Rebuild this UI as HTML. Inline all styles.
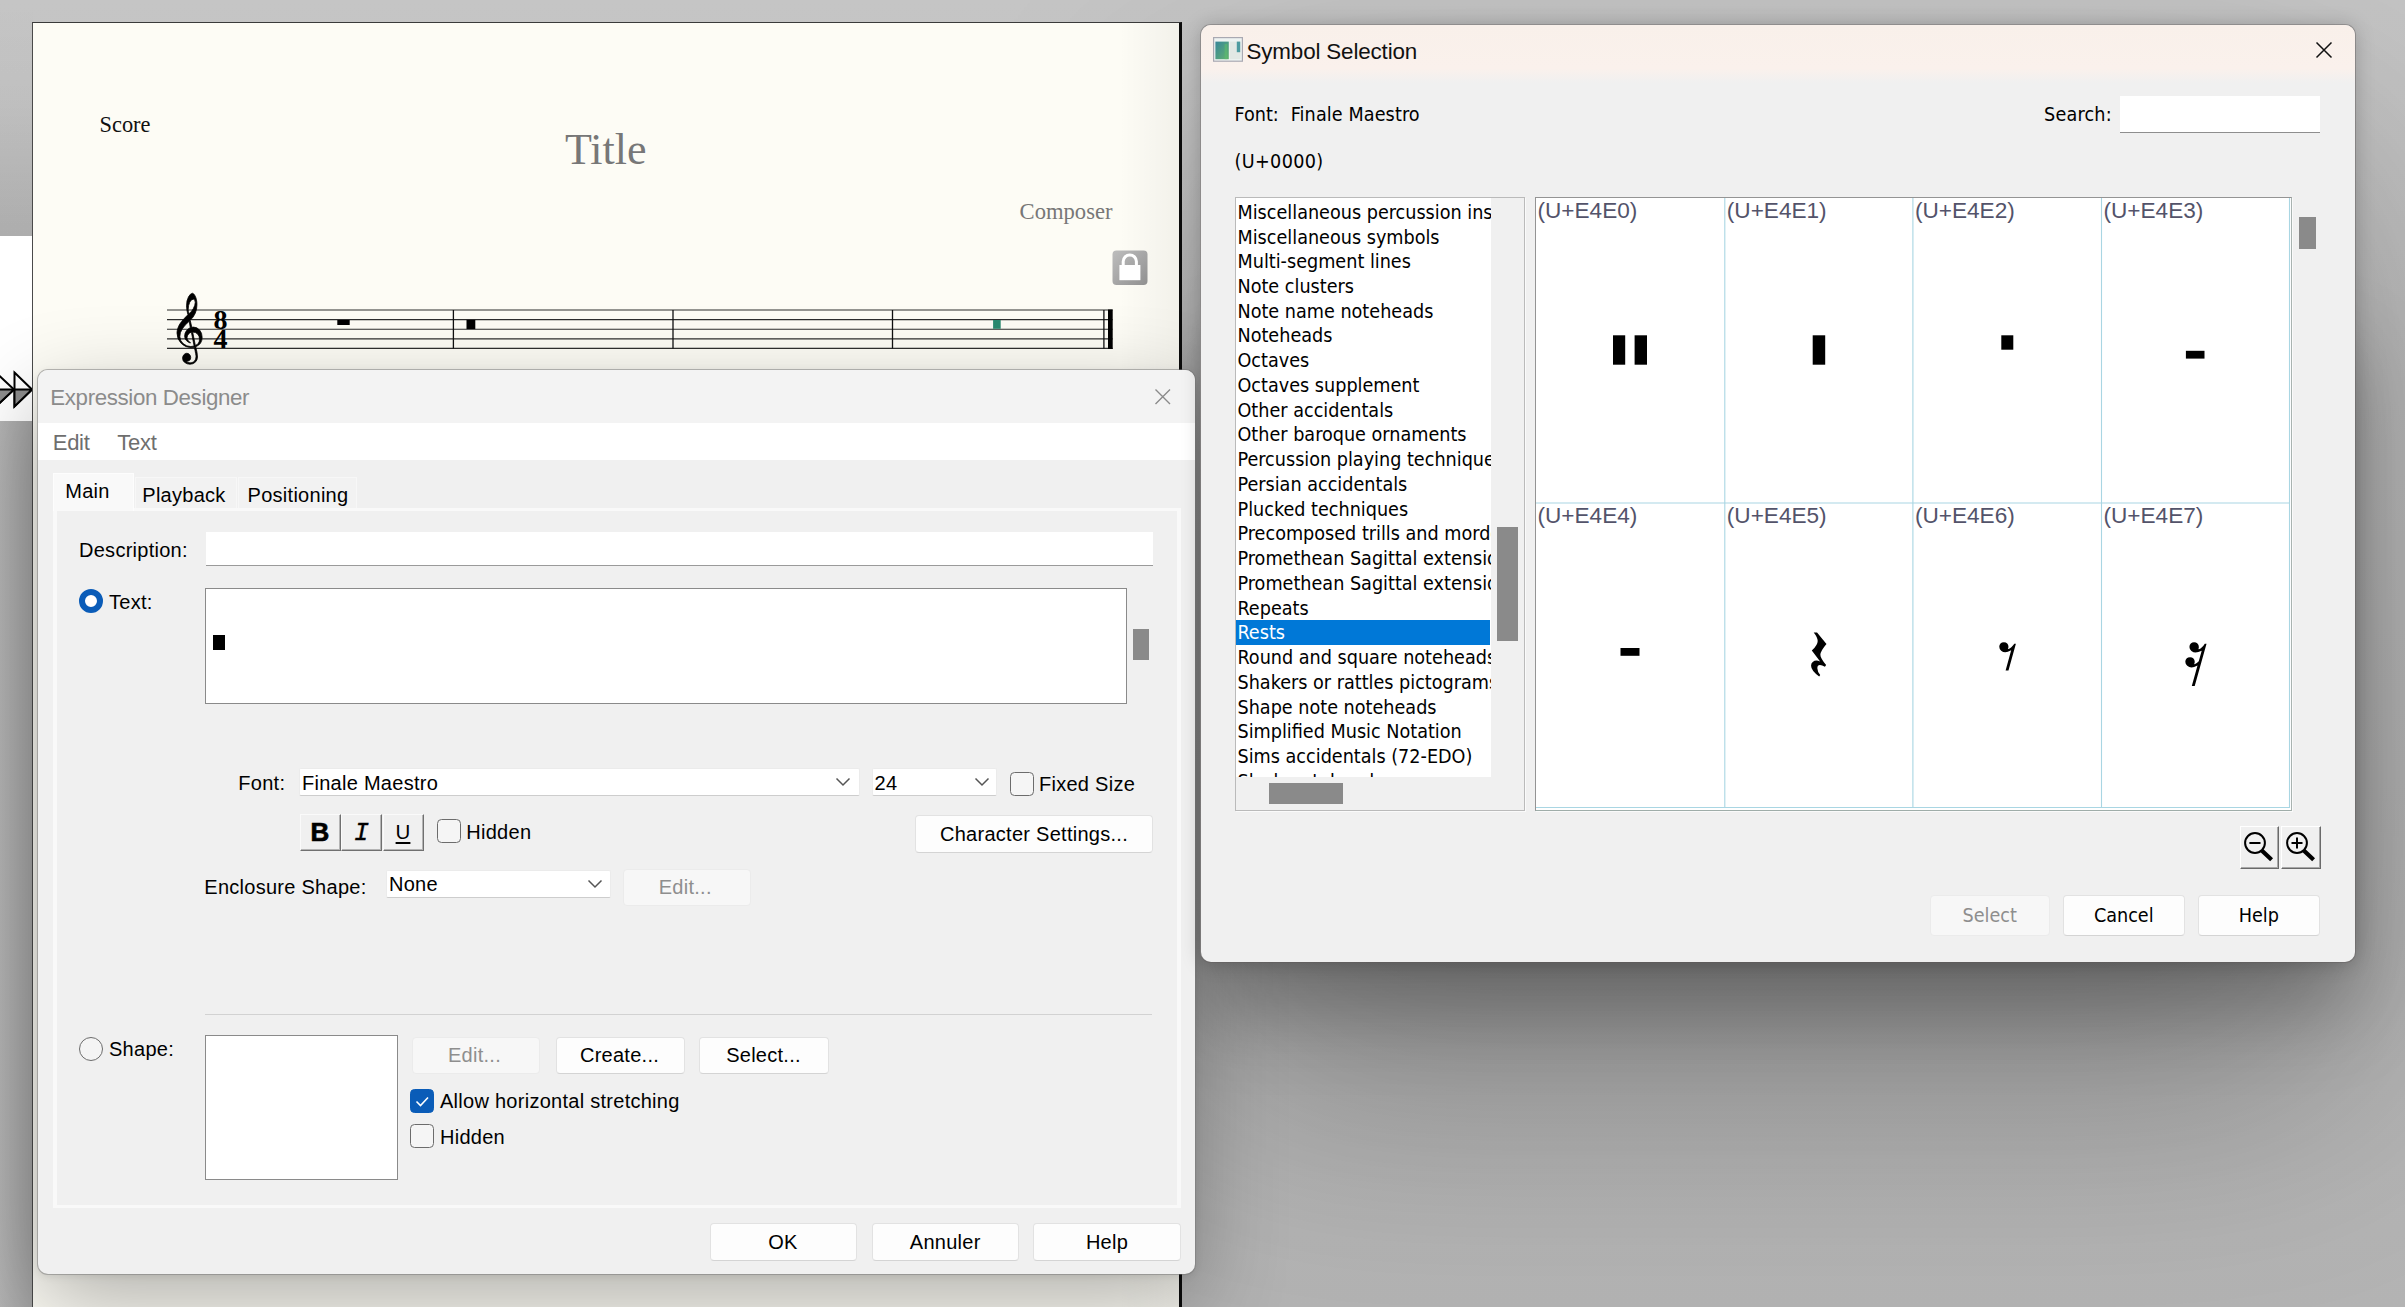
<!DOCTYPE html>
<html><head><meta charset="utf-8"><title>Expression Designer</title>
<style>
*{box-sizing:border-box}
html,body{margin:0;padding:0}
body{width:2405px;height:1307px;position:relative;overflow:hidden;background:#c3c3c3;font-family:"Liberation Sans",sans-serif;color:#000}
.abs{position:absolute}
.t{position:absolute;white-space:nowrap;line-height:1}
/* score page */
#bgshade{left:0;top:0;width:2405px;height:1307px;background:linear-gradient(180deg,#c5c5c5 0,#c0c0c0 30%,#b4b4b4 100%)}
#page{left:32px;top:22px;width:1150px;height:1300px;background:#fdfcf5;border-left:1px solid #4a4a4a;border-top:1px solid #3a3a3a;border-right:3px solid #0c0c0c}
.serif{font-family:"Liberation Serif",serif}
/* dialogs */
.dlg{background:#f0f0f0;border-radius:10px}
.ar{font-family:"Liberation Sans",sans-serif;font-size:20px;letter-spacing:.27px}
.th{font-family:"DejaVu Sans Condensed","DejaVu Sans",sans-serif;font-stretch:condensed;font-size:19.6px}
.btn{position:absolute;background:#fdfdfd;border:1px solid #e2e2e2;border-bottom-color:#d4d4d4;border-radius:4px;text-align:center;white-space:nowrap}
.btn.dis{background:#f7f7f7;border-color:#ebebeb;color:#8e8e8e}
.inp{position:absolute;background:#fff;border-bottom:1px solid #9a9a9a}
.cb{position:absolute;width:24px;height:24px;border:1.4px solid #6c6c6c;border-radius:4.5px;background:#f5f5f5}
.rb{position:absolute;width:24px;height:24px;border:1.4px solid #6c6c6c;border-radius:50%;background:#f4f4f4}
.biu{width:41px;height:37px;background:#f0f0f0;border-top:1px solid #fafafa;border-left:1px solid #fafafa;border-right:1.5px solid #707070;border-bottom:1.5px solid #707070;text-align:center;line-height:34px;box-shadow:inset -1px -1px 0 #b4b4b4}
.li{white-space:nowrap;padding-top:1.3px}
.cl{font-family:"Liberation Sans",sans-serif;font-size:22.6px;color:#53536a}
.zb{width:40px;height:43px;background:#f0f0f0;border-top:1px solid #fff;border-left:1px solid #fff;border-right:1.5px solid #6a6a6a;border-bottom:1.5px solid #6a6a6a;box-shadow:inset -1px -1px 0 #a8a8a8}
</style></head>
<body>
<div id="bgshade" class="abs"></div>
<div class="abs" style="left:1200px;top:24px;width:1155px;height:938px;border-radius:11px;box-shadow:0 125px 300px rgba(0,0,0,.30)"></div>
<div class="abs" style="left:1200px;top:300px;width:1155px;height:662px;border-radius:11px;box-shadow:0 50px 80px rgba(0,0,0,.25)"></div>
<div class="abs" style="left:0;top:421px;width:33px;height:900px;background:linear-gradient(90deg,#b3b3b3,#a2a2a2)"></div>
<!--LEFTSTRIP-->
<!--PAGE-START-->
<div class="abs" style="left:0;top:0;width:33px;height:236px;background:linear-gradient(180deg,rgba(0,0,0,0) 0,rgba(0,0,0,.02) 40%,rgba(0,0,0,.11) 100%)"></div>
<div class="abs" style="left:0;top:236px;width:33px;height:185px;background:#fff"></div>
<svg class="abs" style="left:0;top:368px" width="33" height="44" viewBox="0 0 33 44">
 <g stroke="#000" stroke-width="2" stroke-linejoin="miter">
  <path d="M-4 4.5 L14 21.5 L-4 38.5 Z" fill="#fff"/><path d="M-4 21.5 L14 21.5 L-4 38.5 Z" fill="#8c8c8c"/>
  <path d="M14.5 4.5 L32 21.5 L14.5 38.5 Z" fill="#fff"/><path d="M14.5 21.5 L32 21.5 L14.5 38.5 Z" fill="#8c8c8c"/>
 </g>
</svg>
<div id="page" class="abs"></div>
<div class="abs" style="left:1119px;top:23px;width:60px;height:1284px;background:linear-gradient(90deg,rgba(0,0,0,0),rgba(0,0,0,.045))"></div>
<div class="t serif" style="left:99.5px;top:114px;font-size:22.4px;color:#111">Score</div>
<div class="t serif" style="left:565px;top:127.6px;font-size:44px;color:#777">Title</div>
<div class="t serif" style="left:1019.6px;top:201px;font-size:22.6px;color:#777">Composer</div>
<svg class="abs" style="left:1112px;top:250px" width="36" height="36" viewBox="0 0 36 36">
 <defs><linearGradient id="lk" x1="0" y1="0" x2="1" y2="1"><stop offset="0" stop-color="#bdbdbd"/><stop offset="1" stop-color="#909090"/></linearGradient></defs>
 <rect x="0.5" y="0.5" width="35" height="34.5" rx="4" fill="url(#lk)"/>
 <path d="M11.2 16 V11.5 a6.6 6.6 0 0 1 13.2 0 V16" fill="none" stroke="#fff" stroke-width="3"/>
 <rect x="7.4" y="15" width="21" height="15.2" fill="#fff"/>
</svg>
<svg class="abs" style="left:160px;top:285px" width="960" height="90" viewBox="160 285 960 90">
 <g stroke="#2e2e2e" stroke-width="1.15">
  <path d="M167 310H1112.6M167 319.6H1112.6M167 329.2H1112.6M167 338.8H1112.6M167 348.4H1112.6"/>
  <path d="M453.4 310V348.4M673 310V348.4M892.5 310V348.4M1103.9 310V348.4" stroke="#111" stroke-width="1.3"/>
 </g>
 <rect x="1108" y="309.5" width="4.7" height="39.5" fill="#000"/>
 <g transform="translate(169.85 346.9) scale(0.0596 -0.0596)"><path d="M434 2Q464 -103 464 -170Q464 -223 427.0 -257.0Q390 -291 337 -291Q287 -291 250.0 -261.5Q213 -232 213 -190Q213 -160 233.5 -133.5Q254 -107 283.5 -107.0Q313 -107 331.5 -128.5Q350 -150 350 -178Q350 -240 280 -240Q298 -268 338 -268Q353 -268 368.5 -263.5Q384 -259 401.0 -248.0Q418 -237 428.5 -213.5Q439 -190 439 -157Q439 -136 411 -6Q389 -12 356 -12Q259 -12 189.5 60.0Q120 132 120 232Q120 267 131.5 303.0Q143 339 157.5 366.5Q172 394 200.5 428.5Q229 463 248.5 483.5Q268 504 303 539Q280 621 280 689Q280 779 313.0 839.5Q346 900 379 900Q389 900 401.5 887.0Q414 874 426.0 851.0Q438 828 446.5 790.5Q455 753 455 710Q455 551 342 447L368 329Q384 332 397 332Q458 332 500.0 282.5Q542 233 542 162Q542 44 434 2ZM426 746Q426 801 394 801Q358 801 333.0 748.0Q308 695 308 630Q308 588 321 557Q359 580 392.5 639.5Q426 699 426 746ZM498 128Q498 183 466.0 216.0Q434 249 383 249L428 23Q498 52 498 128ZM407 17 361 247Q334 241 311.5 214.0Q289 187 289 158Q289 143 295.0 128.5Q301 114 309.5 104.0Q318 94 327.0 86.0Q336 78 342.0 74.5Q348 71 348 71L340 66Q307 75 277.5 106.0Q248 137 248 184Q248 231 277.5 270.5Q307 310 343 323L325 430Q168 299 168 177Q168 104 223.0 55.0Q278 6 348 6Q365 6 407 17Z" fill="#000" stroke="#000" stroke-width="13"/></g>
 <text x="213.6" y="329" font-family="Liberation Serif, serif" font-weight="bold" font-size="28" fill="#000">8</text>
 <text x="213.6" y="347.6" font-family="Liberation Serif, serif" font-weight="bold" font-size="28" fill="#000">4</text>
 <rect x="337.3" y="320" width="12.4" height="5" fill="#000"/>
 <rect x="466.5" y="319.9" width="8.8" height="9.2" fill="#000"/>
 <rect x="993.1" y="320" width="7.6" height="8.8" fill="#2a8a70"/>
</svg>
<!--PAGE-END-->
<!--EXPR-START-->
<div id="expr" class="abs dlg" style="left:38px;top:370px;width:1157px;height:904px;box-shadow:0 0 0 1px rgba(120,120,120,.5),0 30px 90px rgba(0,0,0,.30),0 2px 8px rgba(0,0,0,.10);background:#f0f0f0">
 <div class="abs" style="left:0;top:0;width:1157px;height:54px;background:#f3f3f3;border-radius:10px 10px 0 0"></div>
 <div class="t" style="left:12.3px;top:17px;font-size:22.3px;letter-spacing:-.36px;color:#8b8b8b">Expression Designer</div>
 <svg class="abs" style="left:1116px;top:18px" width="18" height="18" viewBox="0 0 18 18"><path d="M1.5 1.5L16 16M16 1.5L1.5 16" stroke="#8a8a8a" stroke-width="1.4" fill="none"/></svg>
 <div class="abs" style="left:0;top:53px;width:1157px;height:37px;background:#fff"></div>
 <div class="t" style="left:14.8px;top:62.3px;font-size:22px;letter-spacing:-.3px;color:#6e6e6e">Edit</div>
 <div class="t" style="left:79.3px;top:62.3px;font-size:22px;letter-spacing:-.3px;color:#6e6e6e">Text</div>
 <!-- tabs -->
 <div class="abs" style="left:14.5px;top:138px;width:1128px;height:699.5px;border:3.5px solid #f9f9f9;border-left-width:4.5px;border-right-width:4.5px;background:#f0f0f0"></div>
 <div class="abs" style="left:15px;top:103px;width:81px;height:38px;background:#f9f9f9;border:1px solid #fdfdfd;border-bottom:none"></div>
 <div class="abs" style="left:97px;top:107px;width:102px;height:31px;background:#f2f2f2;border:1px solid #f7f7f7;border-bottom:none"></div>
 <div class="abs" style="left:200px;top:107px;width:119px;height:31px;background:#f2f2f2;border:1px solid #f7f7f7;border-bottom:none"></div>
 <div class="t ar" style="left:27.3px;top:110.6px">Main</div>
 <div class="t ar" style="left:104.3px;top:114.8px">Playback</div>
 <div class="t ar" style="left:209.6px;top:114.8px">Positioning</div>
 <!-- description -->
 <div class="t ar" style="left:41px;top:170.3px">Description:</div>
 <div class="inp" style="left:168px;top:162px;width:947px;height:34px"></div>
 <!-- text radio -->
 <div class="rb" style="left:41px;top:219px;border:6.5px solid #0a5cb8;background:#fff"></div>
 <div class="t ar" style="left:71px;top:222px">Text:</div>
 <div class="abs" style="left:167px;top:217.5px;width:922px;height:116px;background:#fff;border:1px solid #8a8a8a"></div>
 <div class="abs" style="left:174.5px;top:265px;width:12.5px;height:15px;background:#000"></div>
 <div class="abs" style="left:1095px;top:259px;width:15.5px;height:31px;background:#8a8a8a"></div>
 <!-- font row -->
 <div class="t ar" style="left:200.3px;top:402.6px">Font:</div>
 <div class="inp" style="left:260.5px;top:398px;width:561px;height:27.5px;border:1px solid #ebebeb;border-bottom-color:#cdcdcd;border-radius:2px"></div>
 <div class="t ar" style="left:264px;top:403px">Finale Maestro</div>
 <svg class="abs" style="left:797px;top:407px" width="16" height="10" viewBox="0 0 16 10"><path d="M1.5 1.5L8 8L14.5 1.5" stroke="#555" stroke-width="1.5" fill="none"/></svg>
 <div class="inp" style="left:834px;top:398px;width:125px;height:27.5px;border:1px solid #ebebeb;border-bottom-color:#cdcdcd;border-radius:2px"></div>
 <div class="t ar" style="left:836.5px;top:403px">24</div>
 <svg class="abs" style="left:936px;top:407px" width="16" height="10" viewBox="0 0 16 10"><path d="M1.5 1.5L8 8L14.5 1.5" stroke="#555" stroke-width="1.5" fill="none"/></svg>
 <div class="cb" style="left:972px;top:402px"></div>
 <div class="t ar" style="left:1001px;top:404.2px">Fixed Size</div>
 <!-- B I U -->
 <div class="abs biu" style="left:261.5px;top:444px"><b style="font-size:26px;-webkit-text-stroke:.7px #000;letter-spacing:0">B</b></div>
 <div class="abs biu" style="left:303px;top:444px"><i style="font-family:'Liberation Mono',monospace;font-size:25px;-webkit-text-stroke:.35px #000;position:relative;top:2px">I</i></div>
 <div class="abs biu" style="left:344.5px;top:444px"><span style="font-size:20.5px;text-decoration:underline;text-decoration-thickness:2.2px;text-underline-offset:2.6px">U</span></div>
 <div class="cb" style="left:399px;top:449px"></div>
 <div class="t ar" style="left:428.3px;top:452px">Hidden</div>
 <div class="btn ar" style="left:877px;top:445px;width:238px;height:38px;line-height:36px">Character Settings...</div>
 <!-- enclosure -->
 <div class="t ar" style="left:166.3px;top:507.2px">Enclosure Shape:</div>
 <div class="inp" style="left:348px;top:500px;width:225px;height:27.5px;border:1px solid #ebebeb;border-bottom-color:#cdcdcd;border-radius:2px"></div>
 <div class="t ar" style="left:351px;top:504px">None</div>
 <svg class="abs" style="left:549px;top:509px" width="16" height="10" viewBox="0 0 16 10"><path d="M1.5 1.5L8 8L14.5 1.5" stroke="#555" stroke-width="1.5" fill="none"/></svg>
 <div class="btn dis ar" style="left:584.5px;top:499px;width:128.5px;height:37px;line-height:35px;text-indent:-3px">Edit...</div>
 <div class="abs" style="left:167px;top:643.6px;width:947px;height:1.5px;background:#d2d2d2"></div>
 <!-- shape -->
 <div class="rb" style="left:41px;top:667px"></div>
 <div class="t ar" style="left:71px;top:669px">Shape:</div>
 <div class="abs" style="left:167px;top:665px;width:193px;height:145px;background:#fff;border:1px solid #8a8a8a"></div>
 <div class="btn dis ar" style="left:374px;top:666.5px;width:128px;height:37px;line-height:35px;text-indent:-3px">Edit...</div>
 <div class="btn ar" style="left:518px;top:666.5px;width:129px;height:37px;line-height:35px;text-indent:-2px">Create...</div>
 <div class="btn ar" style="left:660.5px;top:666.5px;width:130px;height:37px;line-height:35px">Select...</div>
 <div class="cb" style="left:372px;top:719px;background:#0a5cb8;border-color:#0a5cb8"><svg width="22" height="22" viewBox="0 0 22 22" style="position:absolute;left:0;top:0"><path d="M5.5 11.5L9.5 15.5L17 7.5" stroke="#fff" stroke-width="1.6" fill="none"/></svg></div>
 <div class="t ar" style="left:402px;top:721px">Allow horizontal stretching</div>
 <div class="cb" style="left:372px;top:754px"></div>
 <div class="t ar" style="left:402px;top:756.5px">Hidden</div>
 <!-- bottom buttons -->
 <div class="btn ar" style="left:671.5px;top:853px;width:147px;height:38px;line-height:36px">OK</div>
 <div class="btn ar" style="left:833.5px;top:853px;width:147.5px;height:38px;line-height:36px">Annuler</div>
 <div class="btn ar" style="left:995px;top:853px;width:148px;height:38px;line-height:36px">Help</div>
</div>
<!--EXPR-END-->
<!--SYM-START-->
<div id="sym" class="abs dlg" style="left:1200.5px;top:24.5px;width:1154.5px;height:937.5px;box-shadow:0 0 0 1px rgba(95,90,90,.42),0 1px 20px rgba(0,0,0,.22)">
 <div class="abs" style="left:0;top:0;width:100%;height:58px;background:linear-gradient(180deg,#f9f0ea 0,#faf1ec 75%,#f0f0f0 100%);border-radius:10px 10px 0 0"></div>
 <svg class="abs" style="left:12px;top:12px" width="31" height="26" viewBox="0 0 31 26">
  <defs><linearGradient id="ig" x1="0" y1="0" x2="1" y2="1"><stop offset="0" stop-color="#38869a"/><stop offset="1" stop-color="#62b26e"/></linearGradient></defs>
  <rect x="0.6" y="0.6" width="28.8" height="23.6" fill="#eef3f2" stroke="#a9a9b2" stroke-width="1.2"/>
  <rect x="2.4" y="4.6" width="13.4" height="17.6" fill="url(#ig)"/>
  <rect x="11.6" y="7" width="2.6" height="15.2" fill="#5cc06c" opacity=".55"/>
  <rect x="16.6" y="4.6" width="11" height="17.6" fill="#e2e8e4"/>
  <rect x="23.8" y="4.6" width="3.4" height="10.6" fill="#4e9ba0"/>
 </svg>
 <div class="t" style="left:46px;top:16px;font-size:22.4px;letter-spacing:-.15px;color:#111">Symbol Selection</div>
 <svg class="abs" style="left:1113px;top:15px" width="20" height="20" viewBox="0 0 20 20"><path d="M2.5 2.5L17.5 17.5M17.5 2.5L2.5 17.5" stroke="#111" stroke-width="1.5" fill="none"/></svg>
 <div class="t th" style="left:34px;top:80px">Font:</div>
 <div class="t th" style="left:90.3px;top:80px;letter-spacing:.1px">Finale Maestro</div>
 <div class="t th" style="left:843.5px;top:80px;letter-spacing:.2px">Search:</div>
 <div class="inp" style="left:919px;top:71.5px;width:200.5px;height:36.5px;border-bottom-color:#8e8e8e"></div>
 <div class="t th" style="left:34px;top:127px;letter-spacing:.35px">(U+0000)</div>
 <!-- list -->
 <div class="abs" style="left:34px;top:172px;width:290px;height:614.5px;border:1.5px solid #bababa;background:#f0f0f0;box-shadow:1px 1px 0 #fafafa"></div>
 <div class="abs th" style="left:35.5px;top:173.5px;width:254.5px;height:579px;background:#fff;overflow:hidden;white-space:nowrap">
  <div class="abs li" style="left:0;top:1.50px;width:254px;height:24.74px;padding-left:1.5px;line-height:24.74px;">Miscellaneous percussion instruments</div>
  <div class="abs li" style="left:0;top:26.24px;width:254px;height:24.74px;padding-left:1.5px;line-height:24.74px;">Miscellaneous symbols</div>
  <div class="abs li" style="left:0;top:50.98px;width:254px;height:24.74px;padding-left:1.5px;line-height:24.74px;">Multi-segment lines</div>
  <div class="abs li" style="left:0;top:75.72px;width:254px;height:24.74px;padding-left:1.5px;line-height:24.74px;">Note clusters</div>
  <div class="abs li" style="left:0;top:100.46px;width:254px;height:24.74px;padding-left:1.5px;line-height:24.74px;">Note name noteheads</div>
  <div class="abs li" style="left:0;top:125.20px;width:254px;height:24.74px;padding-left:1.5px;line-height:24.74px;">Noteheads</div>
  <div class="abs li" style="left:0;top:149.94px;width:254px;height:24.74px;padding-left:1.5px;line-height:24.74px;">Octaves</div>
  <div class="abs li" style="left:0;top:174.68px;width:254px;height:24.74px;padding-left:1.5px;line-height:24.74px;">Octaves supplement</div>
  <div class="abs li" style="left:0;top:199.42px;width:254px;height:24.74px;padding-left:1.5px;line-height:24.74px;">Other accidentals</div>
  <div class="abs li" style="left:0;top:224.16px;width:254px;height:24.74px;padding-left:1.5px;line-height:24.74px;">Other baroque ornaments</div>
  <div class="abs li" style="left:0;top:248.90px;width:254px;height:24.74px;padding-left:1.5px;line-height:24.74px;">Percussion playing technique pictograms</div>
  <div class="abs li" style="left:0;top:273.64px;width:254px;height:24.74px;padding-left:1.5px;line-height:24.74px;">Persian accidentals</div>
  <div class="abs li" style="left:0;top:298.38px;width:254px;height:24.74px;padding-left:1.5px;line-height:24.74px;">Plucked techniques</div>
  <div class="abs li" style="left:0;top:323.12px;width:254px;height:24.74px;padding-left:1.5px;line-height:24.74px;">Precomposed trills and mordents</div>
  <div class="abs li" style="left:0;top:347.86px;width:254px;height:24.74px;padding-left:1.5px;line-height:24.74px;">Promethean Sagittal extension (high precision) single-shaft accidentals</div>
  <div class="abs li" style="left:0;top:372.60px;width:254px;height:24.74px;padding-left:1.5px;line-height:24.74px;">Promethean Sagittal extension (high precision) multi-shaft accidentals</div>
  <div class="abs li" style="left:0;top:397.34px;width:254px;height:24.74px;padding-left:1.5px;line-height:24.74px;">Repeats</div>
  <div class="abs li" style="left:0;top:422.08px;width:254px;height:24.74px;padding-left:1.5px;line-height:24.74px;background:#0078d7;color:#fff;">Rests</div>
  <div class="abs li" style="left:0;top:446.82px;width:254px;height:24.74px;padding-left:1.5px;line-height:24.74px;">Round and square noteheads</div>
  <div class="abs li" style="left:0;top:471.56px;width:254px;height:24.74px;padding-left:1.5px;line-height:24.74px;">Shakers or rattles pictograms</div>
  <div class="abs li" style="left:0;top:496.30px;width:254px;height:24.74px;padding-left:1.5px;line-height:24.74px;">Shape note noteheads</div>
  <div class="abs li" style="left:0;top:521.04px;width:254px;height:24.74px;padding-left:1.5px;line-height:24.74px;">Simplified Music Notation</div>
  <div class="abs li" style="left:0;top:545.78px;width:254px;height:24.74px;padding-left:1.5px;line-height:24.74px;">Sims accidentals (72-EDO)</div>
  <div class="abs li" style="left:0;top:570.52px;width:254px;height:24.74px;padding-left:1.5px;line-height:24.74px;">Slash noteheads</div>
 </div>
 <div class="abs" style="left:296.5px;top:502.5px;width:20.5px;height:113.5px;background:#8a8a8a"></div>
 <div class="abs" style="left:68.5px;top:758.5px;width:73.5px;height:20.5px;background:#8a8a8a"></div>
 <!-- grid -->
 <div class="abs" style="left:334.5px;top:172px;width:757px;height:614.3px;border:1.5px solid #949494;border-right-color:#a9b3b0;border-bottom-color:#9fada9;background:#fff;box-shadow:1px 1px 0 #fafafa"></div>
 <svg class="abs" style="left:334px;top:172px" width="758" height="613" viewBox="0 0 758 613">
  <g stroke="#a9d6e3" stroke-width="1.1" fill="none">
   <path d="M189.8 1V611M377.9 1V611M566.5 1V611M754.5 1V611M1 306H755M1 610.5H755"/>
  </g>
  <g fill="#000">
   <rect x="78" y="138.3" width="12.2" height="29.4"/><rect x="99.6" y="138.3" width="12.4" height="29.4"/>
   <rect x="277.7" y="138.3" width="12.5" height="29.4"/>
   <rect x="466.3" y="138.3" width="12" height="14.4"/>
   <rect x="650.9" y="153.8" width="18.6" height="7.8"/>
   <rect x="85.5" y="451" width="19" height="7.8"/>
   <g transform="translate(272 484.1) scale(0.0738 -0.0738)"><path d="M55 208Q55 242 77.5 260.0Q100 278 130 278Q150 278 178 267L65 415Q145 487 145 544Q145 589 91 658H136L264 502Q181 404 181 356Q181 310 259 217L243 194Q203 217 176 217Q140 217 140.0 173.0Q140 129 179 84L165 62Q55 144 55 208Z"/></g>
   <g transform="translate(462.8 486.3) scale(0.0773 -0.0773)"><path d="M136 443Q152 443 175.0 466.5Q198 490 213 511H234L138 166H101L173 426Q126 402 97.0 402.0Q68 402 43.5 422.5Q19 443 19 473Q19 495 35.0 513.5Q51 532 79 532Q106 532 122.0 513.5Q138 495 138 473Q138 458 131 445Q135 443 136 443Z"/></g>
   <g transform="translate(648.8 487.3) scale(0.0792 -0.0792)"><path d="M189 443Q205 443 229.0 467.0Q253 491 265 511H287L138 -23H101L173 237Q126 213 97.0 213.0Q68 213 43.5 233.5Q19 254 19 284Q19 306 35.0 324.5Q51 343 79 343Q106 343 122.0 324.5Q138 306 138 284Q138 269 131 256Q135 254 136 254Q155 254 189 291L226 425Q181 402 149 402Q121 402 96.0 422.0Q71 442 71 472Q71 498 88.5 514.5Q106 531 130 531Q155 531 172.5 514.0Q190 497 190 472Q190 457 184 445Q188 443 189 443Z"/></g>
  </g>
 </svg>
 <div class="abs" style="left:334px;top:172px;width:758px;height:613px">
  <div class="t cl" style="left:3.0px;top:3.0px">(U+E4E0)</div>
  <div class="t cl" style="left:192.3px;top:3.0px">(U+E4E1)</div>
  <div class="t cl" style="left:380.4px;top:3.0px">(U+E4E2)</div>
  <div class="t cl" style="left:569.0px;top:3.0px">(U+E4E3)</div>
  <div class="t cl" style="left:3.0px;top:308.5px">(U+E4E4)</div>
  <div class="t cl" style="left:192.3px;top:308.5px">(U+E4E5)</div>
  <div class="t cl" style="left:380.4px;top:308.5px">(U+E4E6)</div>
  <div class="t cl" style="left:569.0px;top:308.5px">(U+E4E7)</div>
 </div>
 <div class="abs" style="left:1098px;top:192.5px;width:17px;height:32px;background:#8a8a8a"></div>
 <!-- zoom buttons -->
 <div class="abs zb" style="left:1039.5px;top:801.5px;width:39px"><svg width="37" height="41" viewBox="0 0 37 41"><circle cx="14" cy="16" r="9.9" fill="#f2f2f2" stroke="#000" stroke-width="2"/><path d="M8.4 16H19.5" stroke="#000" stroke-width="2"/><path d="M20.8 23.4L30.6 32.8" stroke="#000" stroke-width="4.2"/></svg></div>
 <div class="abs zb" style="left:1080.5px;top:801.5px;width:40px"><svg width="37" height="41" viewBox="0 0 37 41"><circle cx="15" cy="16" r="9.9" fill="#f2f2f2" stroke="#000" stroke-width="2"/><path d="M9.5 16H20.5M15 10.5V21.5" stroke="#000" stroke-width="2"/><path d="M21.8 23.4L31.6 32.8" stroke="#000" stroke-width="4.2"/></svg></div>
 <!-- buttons -->
 <div class="btn dis th" style="left:729px;top:870px;width:120.5px;height:41px;line-height:39px">Select</div>
 <div class="btn th" style="left:862.5px;top:870px;width:121.5px;height:41px;line-height:39px">Cancel</div>
 <div class="btn th" style="left:997.5px;top:870px;width:121.5px;height:41px;line-height:39px">Help</div>
</div>
<!--SYM-END-->
</body></html>
